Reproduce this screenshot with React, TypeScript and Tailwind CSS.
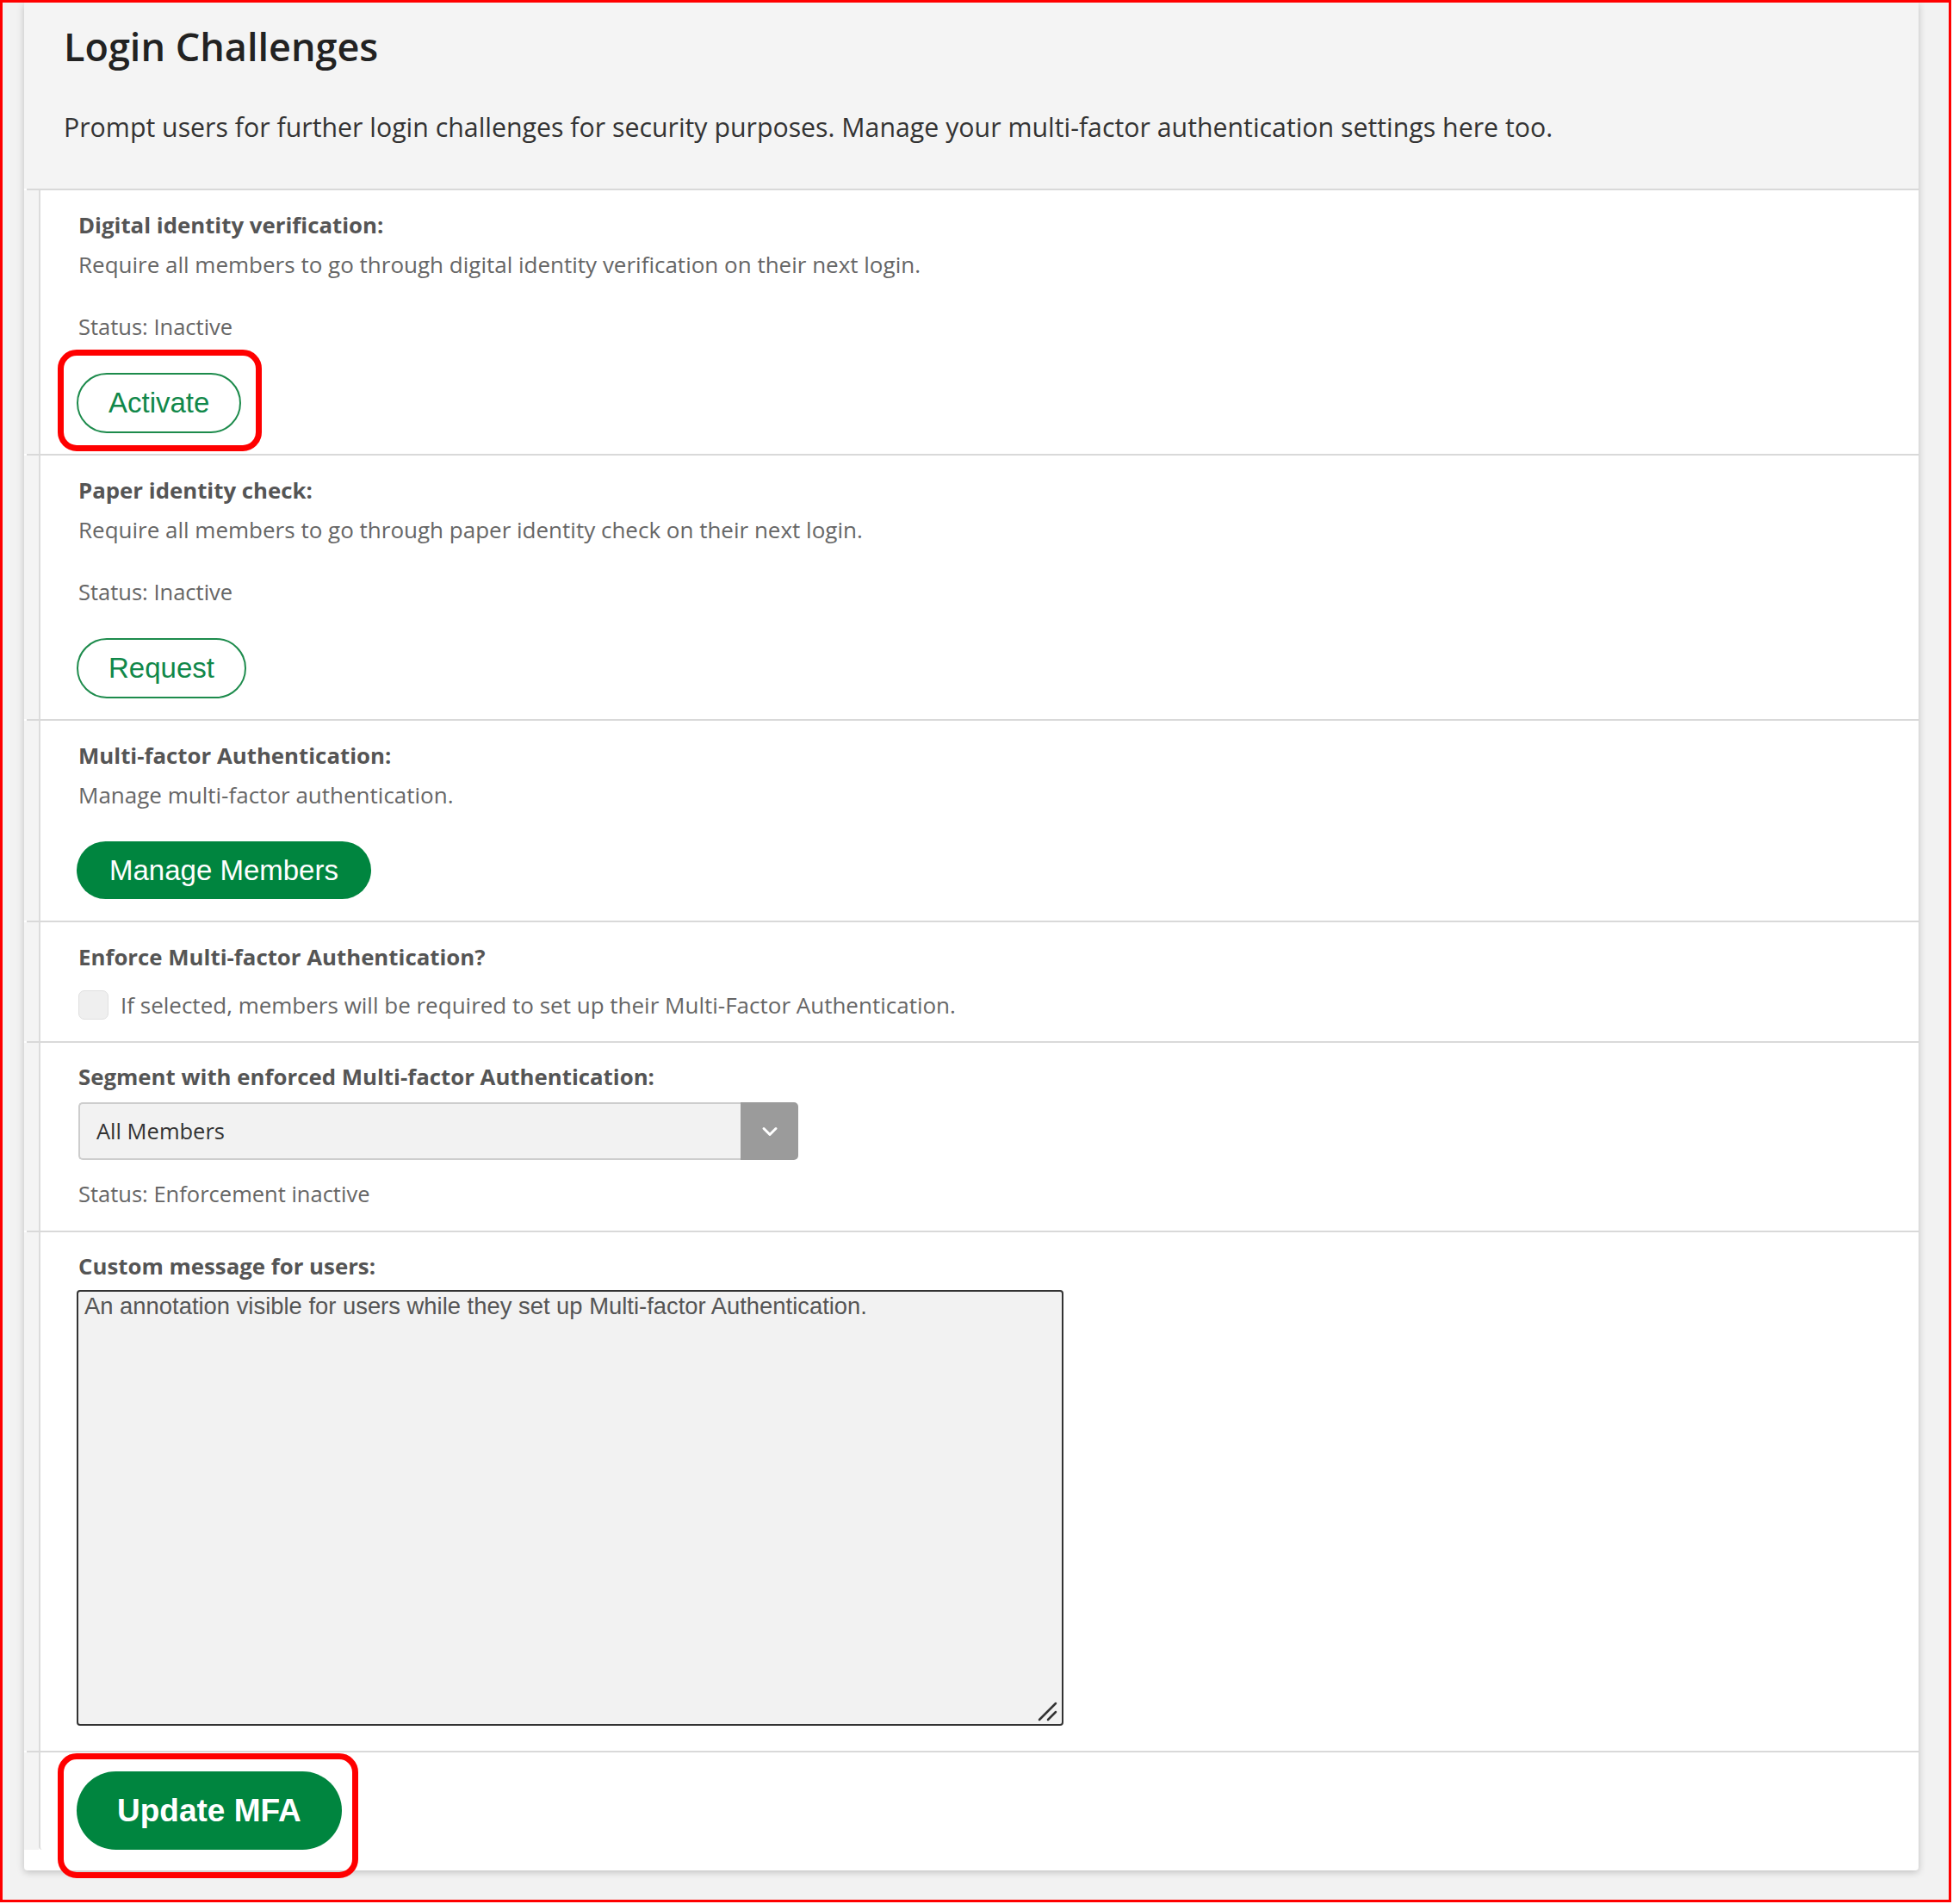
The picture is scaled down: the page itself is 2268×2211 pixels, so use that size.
import React from "react";

const sans = { fontFamily: '"Open Sans", "Noto Sans", sans-serif' };
const arial = { fontFamily: '"Liberation Sans", Arial, sans-serif' };

function Row({ children, className }: { children: React.ReactNode; className: string }) {
  return (
    <div className="flex">
      <div className="w-[17px] shrink-0 bg-[#f4f4f4]" />
      <div className={"flex-1 border-l-2 border-[#dcdcdc] bg-white pl-[44px] " + className}>{children}</div>
    </div>
  );
}

function Divider() {
  return <div className="h-[2px] ml-[3px] bg-[#d9d9d9]" />;
}

function Heading({ children }: { children: React.ReactNode }) {
  return <div className="text-[25.8px] font-bold leading-[46px] text-[#555555]">{children}</div>;
}

function Body({ children, className = "" }: { children: React.ReactNode; className?: string }) {
  return <div className={"text-[26px] leading-[46px] text-[#666666] " + className}>{children}</div>;
}

function Status({ children, className = "" }: { children: React.ReactNode; className?: string }) {
  return <div className={"text-[25.5px] leading-[46px] text-[#666666] " + className}>{children}</div>;
}

function OutlineButton({ label }: { label: string }) {
  return (
    <button
      style={arial}
      className="-ml-[2px] h-[70px] px-[35px] inline-flex items-center rounded-full border-2 border-[#1d8b4c] bg-white text-[33px] text-[#11884a]"
    >
      {label}
    </button>
  );
}

export default function App() {
  return (
    <div className="w-[2268px] h-[2211px] bg-white" style={sans}>
      <div className="w-[2266px] h-[2209px] border-[3px] border-[#ff0000] bg-[#f2f2f2] pl-[25px] overflow-hidden">
        <div className="w-[2200px] h-[2169px] bg-white rounded-b-[4px] shadow-[0_2px_8px_rgba(0,0,0,0.22)] flex flex-col">
          {/* Header */}
          <div className="h-[216px] bg-[#f4f4f4] pl-[46px] pt-[21px]">
            <h1 className="text-[45px] leading-[60px] font-semibold text-[#222222]">Login Challenges</h1>
            <p className="mt-[42px] text-[30.3px] leading-[44px] text-[#333333]">
              Prompt users for further login challenges for security purposes. Manage your multi-factor authentication settings here too.
            </p>
          </div>
          <Divider />

          {/* Digital identity verification */}
          <Row className="pt-[17px] pb-[24px]">
            <Heading>Digital identity verification:</Heading>
            <Body>Require all members to go through digital identity verification on their next login.</Body>
            <Status className="mt-[26px]">Status: Inactive</Status>
            <div className="mt-[31px] relative inline-block">
              <OutlineButton label="Activate" />
              <span className="pointer-events-none absolute -left-[24px] -right-[24px] -top-[27px] -bottom-[21px] rounded-[22px] border-[7px] border-[#ff0000]" />
            </div>
          </Row>
          <Divider />

          {/* Paper identity check */}
          <Row className="pt-[17px] pb-[24px]">
            <Heading>Paper identity check:</Heading>
            <Body>Require all members to go through paper identity check on their next login.</Body>
            <Status className="mt-[26px]">Status: Inactive</Status>
            <div className="mt-[31px]">
              <OutlineButton label="Request" />
            </div>
          </Row>
          <Divider />

          {/* MFA */}
          <Row className="pt-[17px] pb-[25px]">
            <Heading>Multi-factor Authentication:</Heading>
            <Body>Manage multi-factor authentication.</Body>
            <div className="mt-[31px]">
              <button
                style={arial}
                className="-ml-[2px] h-[67px] px-[38px] inline-flex items-center rounded-full bg-[#00853f] text-[33px] text-white"
              >
                Manage Members
              </button>
            </div>
          </Row>
          <Divider />

          {/* Enforce */}
          <Row className="pt-[17px] pb-[19px]">
            <Heading>Enforce Multi-factor Authentication?</Heading>
            <div className="mt-[10px] h-[46px] flex items-center">
              <div className="w-[35px] h-[34px] rounded-[7px] border border-[#e0e0e0] bg-[#efefef]" />
              <span className="ml-[14px] text-[26px] text-[#666666]">
                If selected, members will be required to set up their Multi-Factor Authentication.
              </span>
            </div>
          </Row>
          <Divider />

          {/* Segment */}
          <Row className="pt-[16px] pb-[20px]">
            <Heading>Segment with enforced Multi-factor Authentication:</Heading>
            <div className="mt-[7px] w-[836px] h-[67px] flex">
              <div className="flex-1 flex items-center pl-[19px] border-2 border-r-0 border-[#cdcdcd] rounded-l-[5px] bg-[#f2f2f2] text-[25.5px] text-[#333333]">
                All Members
              </div>
              <div className="w-[67px] flex items-center justify-center rounded-r-[5px] bg-[#9b9b9b]">
                <svg width="20" height="12" viewBox="0 0 20 12">
                  <path d="M3 2.5l7 7 7-7" stroke="white" strokeWidth="3" fill="none" strokeLinecap="round" strokeLinejoin="round" />
                </svg>
              </div>
            </div>
            <Status className="mt-[16px]">Status: Enforcement inactive</Status>
          </Row>
          <Divider />

          {/* Custom message */}
          <Row className="pt-[16px] pb-[29px]">
            <Heading>Custom message for users:</Heading>
            <div className="relative -ml-[2px] mt-[5px] w-[1146px] h-[506px]">
              <textarea
                style={arial}
                className="block w-full h-full resize-none border-2 border-[#333333] rounded-[4px] bg-[#f2f2f2] px-[7px] pt-[2px] text-[27.4px] leading-[30px] text-[#555555] outline-none"
                defaultValue="An annotation visible for users while they set up Multi-factor Authentication."
              />
              <svg className="pointer-events-none absolute right-[7px] bottom-[5px]" width="24" height="24" viewBox="0 0 24 24">
                <path d="M22 3L3 22" stroke="#333333" strokeWidth="2.5" strokeLinecap="round" />
                <path d="M22 13L13 22" stroke="#333333" strokeWidth="2.5" strokeLinecap="round" />
              </svg>
            </div>
          </Row>
          <Divider />

          {/* Update */}
          <Row className="pt-[22px] flex-1 rounded-b-[4px]">
            <div className="relative inline-block">
              <button
                style={arial}
                className="-ml-[2px] h-[91px] px-[47px] inline-flex items-center rounded-full bg-[#00853f] text-[37px] font-bold text-white"
              >
                Update MFA
              </button>
              <span className="pointer-events-none absolute -left-[24px] -right-[19px] -top-[21px] -bottom-[33px] rounded-[22px] border-[7px] border-[#ff0000]" />
            </div>
          </Row>
        </div>
      </div>
    </div>
  );
}
